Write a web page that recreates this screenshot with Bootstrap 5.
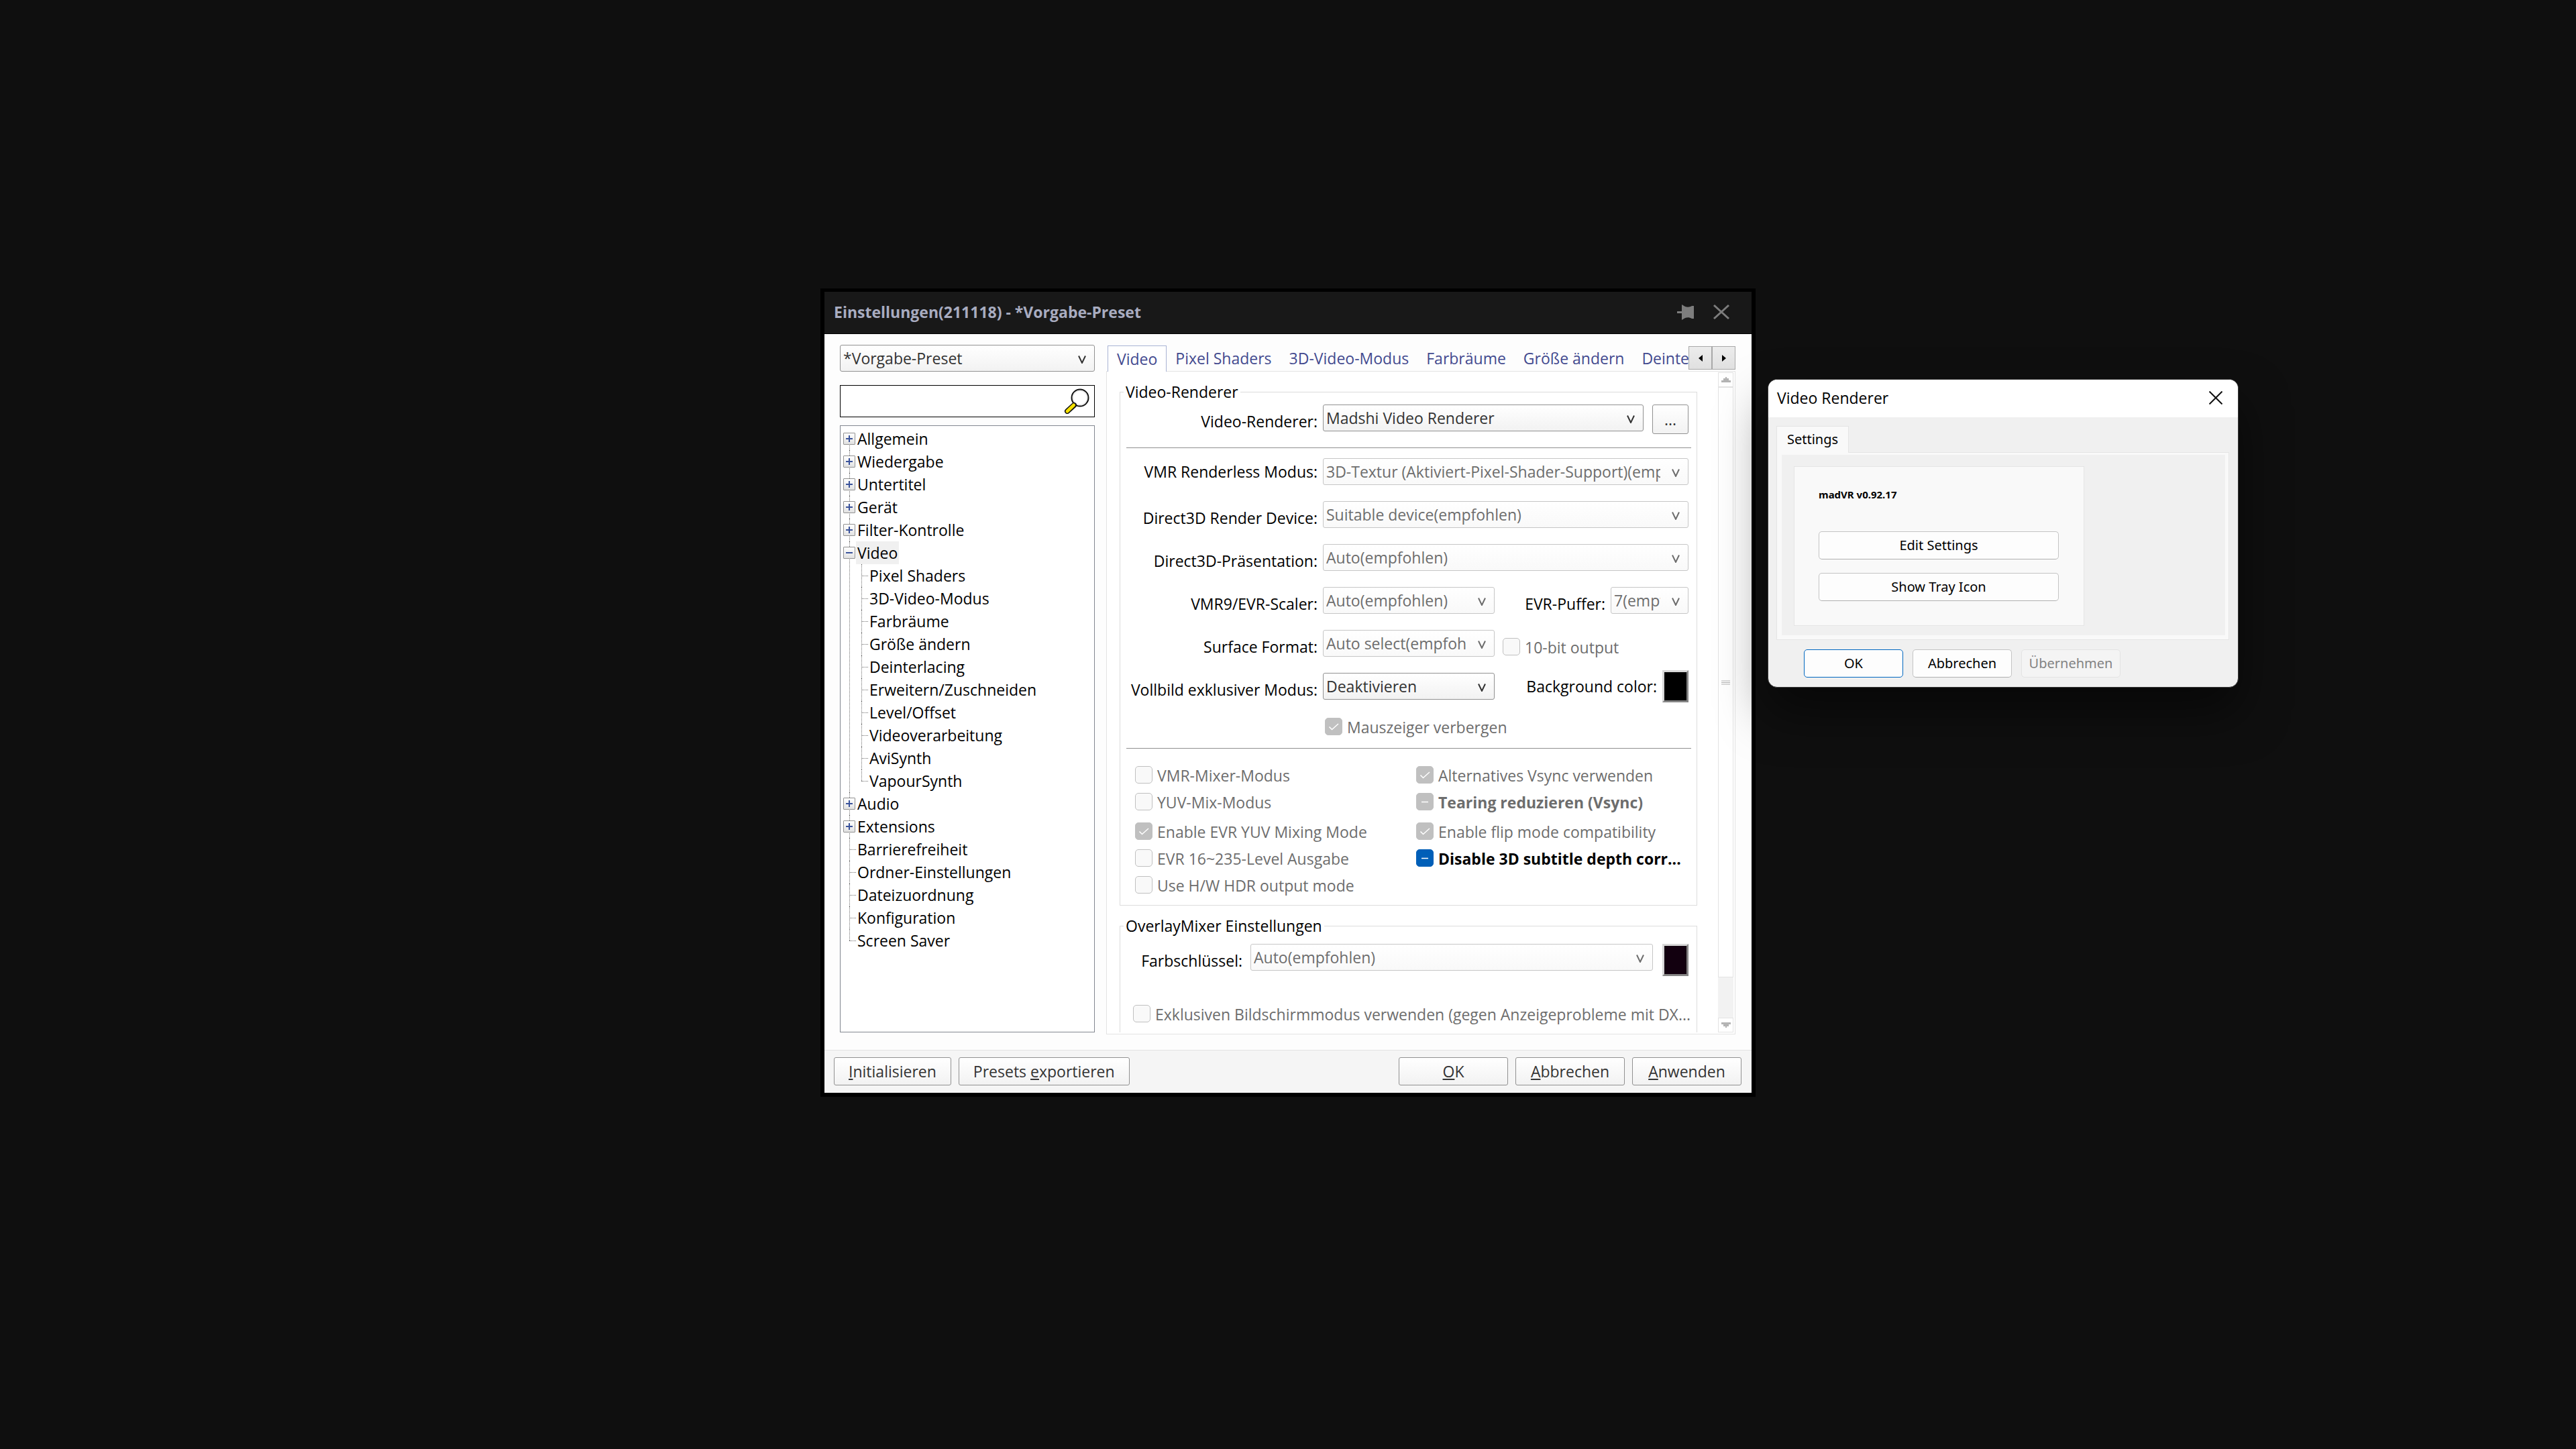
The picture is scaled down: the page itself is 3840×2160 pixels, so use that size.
<!DOCTYPE html>
<html lang="de">
<head>
<meta charset="utf-8">
<meta name="viewport" content="width=device-width, initial-scale=1">
<title>Einstellungen</title>
<link href="https://cdn.jsdelivr.net/npm/bootstrap@5.3.0/dist/css/bootstrap.min.css" rel="stylesheet">
<style>
:root { --ui: "Open Sans", "Noto Sans", sans-serif; --dlg: "Noto Sans", "Open Sans", sans-serif; }
body { background: #0f0f0f; font-family: var(--ui); font-size: 23px; line-height: 30px; color: #000; }
.desktop { min-height: 100vh; overflow: hidden; }
button, select, input { font-family: inherit; font-size: inherit; }

/* main window */
.main-window { left: 1223px; top: 430px; width: 1394px; background: #fdfdfd; border: 6px solid #000; border-top-width: 5px; }
.title-strip { background: #181818; color: #a8acc0; height: 63px; border-bottom: 1px solid #000; padding: 0 32px 2px 14px; }
.title-strip h1 { font-size: 23px; line-height: 60px; font-weight: 700; }
.plain-btn { background: none; border: 0; padding: 0; line-height: 0; }
.workspace { padding: 16px 24px 23px 23px; gap: 17px; }
.side { width: 380px; padding-bottom: 3px; }

/* drop-downs and buttons */
.combo { height: 40px; padding: 0 41px 0 4px; font-size: 23px; line-height: 38px; color: #333; border: 1px solid #919191; border-radius: 3px; box-shadow: none;
  background: url("data:image/svg+xml,%3Csvg xmlns='http://www.w3.org/2000/svg' width='12' height='12'%3E%3Cpath d='M1 0.5L6 11L11 0.5' fill='none' stroke='%23333' stroke-width='2'/%3E%3C/svg%3E") no-repeat right 12px top 15px / 12px 12px, linear-gradient(#fff, #f2f2f2); }
.combo:disabled { opacity: 1; color: #6d6d6d; border-color: #c6c6c6;
  background: url("data:image/svg+xml,%3Csvg xmlns='http://www.w3.org/2000/svg' width='12' height='12'%3E%3Cpath d='M1 0.5L6 11L11 0.5' fill='none' stroke='%236d6d6d' stroke-width='2'/%3E%3C/svg%3E") no-repeat right 12px top 15px / 12px 12px, linear-gradient(#fff, #f9f9f9); }
.combo-short { width: 256px; flex: none; }
.combo-mini { width: 116px; flex: none; }
.push { height: 42px; padding: 0 21px; line-height: 40px; color: #333; border: 1px solid #919191; border-radius: 3px; background: linear-gradient(#fff, #f2f2f2); white-space: nowrap; }
.push-wide { width: 163px; padding: 0; }
.push-more { width: 54px; height: 44px; padding: 0; margin: 0 0 -4px 5px; flex: none; }

.search-box { height: 48px; margin: 20px 0 12px; border: 1px solid #000; background: #fff; padding-right: 7px; }
.search-box input { border: 0; outline: 0; background: transparent; min-width: 0; height: 44px; padding: 0 8px; }

/* tree */
.tree-box { border: 1px solid #828790; background: #fff; padding: 2px 4px; }
.tree-box ul { list-style: none; margin: 0; padding: 0; }
.tree-box ul ul { padding-left: 18px; }
.tree-box li { position: relative; line-height: 34px; }
.tree-box li::before { content: ""; position: absolute; left: 9px; top: 0; bottom: 0; border-left: 1px dotted #6d6d6d; }
.tree-box > ul > li:first-child::before { top: 17px; }
.tree-box li:last-child::before { bottom: auto; height: 17px; }
.tree-box ul ul li:last-child::before { height: 17px; }
.node { height: 34px; }
.node a { color: #000; text-decoration: none; padding: 0 2px; }
.node a.current { background: #f0f0f0; }
.leaf-arm { width: 10px; margin-left: 9px; border-top: 1px dotted #6d6d6d; }
.toggle-box { position: relative; width: 18px; height: 18px; padding: 0; line-height: 0; margin-right: 1px; border: 1px solid #919191; border-radius: 1px; background: linear-gradient(#fff, #e2e2e2); }

/* tabs */
.tab-strip { position: relative; z-index: 1; padding-left: 2px; height: 39px; margin-top: 1px; }
.tab-strip .nav { flex-wrap: nowrap; overflow: hidden; min-width: 0; }
.tab-strip .nav-link { height: 39px; line-height: 38px; padding: 0 13px; color: #434a8f; border: 0; white-space: nowrap; }
.tab-strip .nav-link.active { background: #fff; border: 1px solid #a9b3d4; border-bottom: 0; }
.arrow-btn { width: 35px; height: 35px; margin-top: 1px; padding: 0; line-height: 0; flex: none; border: 1px solid #a8a8a8; background: linear-gradient(#ececec, #e0e0e0); }
.tab-panel { margin-top: -1px; border: 1px solid #e3e3e3; background: #fff; padding: 0 2px 2px 19px; }
.viewport { height: 985px; overflow: hidden; padding: 15px 31px 0 0; }
.bar-track { width: 23px; margin-top: 1px; background: #f2f2f2; }
.bar-btn { height: 22px; background: #fff; border: 1px solid #e3e3e3; padding: 0; line-height: 0; }
.bar-thumb { flex: 0 0 880px; background: #fff; border: 1px solid #e3e3e3; }

/* form groups */
.group { border: 1px solid #dcdcdc; padding: 4px 8px 15px 9px; }
.group legend { float: none; width: auto; font-size: 23px; line-height: 30px; padding: 0 3px; margin: 0 0 0 -4px; }
.group-next { margin-top: 15px; padding-top: 12px; height: 240px; }
.form-line { gap: 8px; height: 40px; padding-right: 4px; }
.form-line label.cap-col { width: 285px; flex: none; text-align: right; white-space: nowrap; }
.form-line label.cap-key { width: 173px; }
.rule { height: 1px; margin: 24px 0 15px; border: 0; background: #8f8f8f; opacity: 1; }
.rule-low { margin: 17px 0 26px; }
.lines { display: flex; flex-direction: column; gap: 24px; }
.swatch { width: 39px; height: 48px; margin: -4px 0; flex: none; padding: 0; border: 3px outset #d8d8d8; background: #000; }
.swatch-key { background: #12000f; margin: 0 0 -8px 6px; }

.tick { gap: 7px; height: 28px; line-height: 28px; white-space: nowrap; color: #6d6d6d; }
.tick input { appearance: none; flex: none; width: 26px; height: 26px; margin: 0; border: 1px solid #c0c0c0; border-radius: 5px; background: #f9f9f9 no-repeat center / 26px 26px; }
.tick input:checked { border-color: #c0c0c0; background-color: #c0c0c0; background-image: url("data:image/svg+xml,%3Csvg xmlns='http://www.w3.org/2000/svg' viewBox='0 0 26 26'%3E%3Cpath d='M6.500 13.500L10.500 17.500L20 9' fill='none' stroke='%23fff' stroke-width='1.500'/%3E%3C/svg%3E"); }
.tick input:indeterminate { border-color: #c0c0c0; background-color: #c0c0c0; background-image: url("data:image/svg+xml,%3Csvg xmlns='http://www.w3.org/2000/svg' viewBox='0 0 26 26'%3E%3Cpath d='M8 13.500H18' fill='none' stroke='%23fff' stroke-width='1.500'/%3E%3C/svg%3E"); }
.tick input:indeterminate:enabled { border-color: #005fb8; background-color: #005fb8; }
.tick-strong { font-weight: 700; }
.tick-live { color: #000; }
.tick-indent { margin: 27px 0 0 296px; }
.tick-last { margin: 51px 0 0 10px; }
.tick-cols { padding-left: 13px; }
.tick-cols > div { display: flex; flex-direction: column; gap: 12px; }
.tick-cols > div:first-child { width: 419px; flex: none; }

.foot { border-top: 1px solid #e3e3e3; background: #f5f5f5; padding: 10px 15px 11px 14px; gap: 11px; }

/* renderer dialog */
.dlg-window { left: 2635px; top: 565px; width: 702px; border: 1px solid #3a3a3a; border-radius: 14px; overflow: hidden; background: #f0f0f0; box-shadow: 0 36px 70px rgba(0,0,0,.5); font-family: var(--dlg); font-size: 20px; }
.dlg-title { height: 56px; background: #fff; padding: 0 23px 2px 13px; font-family: var(--ui); }
.dlg-title h2 { font-size: 23px; line-height: 54px; font-weight: 400; margin: 0; }
.dlg-body { padding: 13px 13px 0 12px; }
.dlg-body .nav-link { position: relative; z-index: 1; height: 40px; line-height: 38px; padding: 0 15px; color: #000; background: #f9f9f9; border: 1px solid #e5e5e5; border-bottom: 0; border-radius: 0; }
.dlg-pane { margin-top: -1px; border: 1px solid #e5e5e5; background: #f9f9f9; padding: 3px 5px 6px 7px; }
.dlg-inner { background: #f0f0f0; padding: 17px 18px 14px; }
.dlg-card { width: 433px; gap: 20px; background: #f9f9f9; border: 1px solid #e5e5e5; padding: 29px 37px 36px 36px; }
.dlg-card strong { font-size: 15px; line-height: 24px; margin-bottom: 23px; }
.dlg-btn { height: 42px; line-height: 40px; padding: 0; background: #fdfdfd; color: #000; border: 1px solid #c4c4c4; border-bottom-color: #b0b0b0; border-radius: 5px; }
.dlg-foot { padding: 14px 53px 14px; gap: 14px; }
.dlg-foot .dlg-btn { width: 148px; }
.dlg-foot .dlg-btn:disabled { color: #838383; background: #f4f4f4; border-color: #e3e3e3; }
.dlg-foot .dlg-default { border-color: #0067c0; }
</style>
<script src="https://cdn.jsdelivr.net/npm/bootstrap@5.3.0/dist/js/bootstrap.bundle.min.js"></script>
</head>
<body>
<main class="desktop position-relative">

<section class="main-window position-absolute" aria-labelledby="mainTitle">
  <header class="title-strip d-flex align-items-center">
    <h1 id="mainTitle" class="m-0 me-auto">Einstellungen(211118) - *Vorgabe-Preset</h1>
    <button class="plain-btn me-4" type="button" aria-label="Anheften"><svg width="32" height="26" viewBox="0 0 32 26"><path d="M3 12h7V2l5 3c3 1 7 1 10-1h3v19h-3c-3-2-7-2-10-1l-5 3V15H3z" fill="#7d7d7d"/></svg></button>
    <button class="plain-btn" type="button" aria-label="Schließen"><svg width="26" height="24" viewBox="0 0 26 24"><path d="M2 2L24 22M24 2L2 22" stroke="#7d7d7d" stroke-width="3"/></svg></button>
  </header>

  <div class="workspace d-flex">
    <aside class="side d-flex flex-column flex-shrink-0">
      <select class="form-select combo" aria-label="Preset"><option>*Vorgabe-Preset</option></select>
      <div class="search-box d-flex align-items-center">
        <input class="flex-grow-1" type="text" aria-label="Suche">
        <svg width="38" height="38" viewBox="0 0 38 38"><circle cx="24" cy="14" r="12.500" fill="#fff" stroke="#111" stroke-width="2"/><circle cx="24" cy="14" r="10.500" fill="none" stroke="#ddd"/><path d="M15 25L5 34" stroke="#111" stroke-width="8" stroke-linecap="round"/><path d="M14.500 25L5 34" stroke="#f5e100" stroke-width="5" stroke-linecap="round"/></svg>
      </div>
      <nav class="tree-box flex-grow-1" aria-label="Kategorien"><ul id="tree"></ul></nav>
    </aside>

    <div class="flex-grow-1" style="min-width:0">
      <div class="tab-strip d-flex">
        <nav class="nav flex-grow-1">
          <a class="nav-link active" href="#">Video</a>
          <a class="nav-link" href="#">Pixel Shaders</a>
          <a class="nav-link" href="#">3D-Video-Modus</a>
          <a class="nav-link" href="#">Farbräume</a>
          <a class="nav-link" href="#">Größe ändern</a>
          <a class="nav-link" href="#">Deinterlacing</a>
        </nav>
        <button class="arrow-btn" type="button" aria-label="Zurück"><svg width="12" height="12"><path d="M9 1v10L3 6z"/></svg></button>
        <button class="arrow-btn" type="button" aria-label="Weiter"><svg width="12" height="12"><path d="M3 1v10l6-5z"/></svg></button>
      </div>

      <div class="tab-panel d-flex">
        <div class="viewport flex-grow-1">
          <fieldset class="group">
            <legend>Video-Renderer</legend>
            <div class="form-line d-flex">
              <label class="cap-col align-self-end" for="renderer">Video-Renderer:</label>
              <select id="renderer" class="form-select combo"><option>Madshi Video Renderer</option></select>
              <button class="push push-more" type="button">...</button>
            </div>
            <hr class="rule">
            <div class="lines">
              <div class="form-line d-flex">
                <label class="cap-col align-self-center" for="vmr">VMR Renderless Modus:</label>
                <select id="vmr" class="form-select combo" disabled><option>3D-Textur (Aktiviert-Pixel-Shader-Support)(empfohlen)</option></select>
              </div>
              <div class="form-line d-flex">
                <label class="cap-col align-self-end" for="d3ddev">Direct3D Render Device:</label>
                <select id="d3ddev" class="form-select combo" disabled><option>Suitable device(empfohlen)</option></select>
              </div>
              <div class="form-line d-flex">
                <label class="cap-col align-self-end" for="d3dpres">Direct3D-Präsentation:</label>
                <select id="d3dpres" class="form-select combo" disabled><option>Auto(empfohlen)</option></select>
              </div>
              <div class="form-line d-flex">
                <label class="cap-col align-self-end" for="scaler">VMR9/EVR-Scaler:</label>
                <select id="scaler" class="form-select combo combo-short" disabled><option>Auto(empfohlen)</option></select>
                <label class="flex-grow-1 text-end align-self-end" for="buffer">EVR-Puffer:</label>
                <select id="buffer" class="form-select combo combo-mini" disabled><option>7(empfohlen)</option></select>
              </div>
              <div class="form-line d-flex">
                <label class="cap-col align-self-end" for="surface">Surface Format:</label>
                <select id="surface" class="form-select combo combo-short" disabled><option>Auto select(empfohlen)</option></select>
                <label class="tick d-flex align-self-end ms-1"><input type="checkbox" disabled>10-bit output</label>
              </div>
              <div class="form-line d-flex">
                <label class="cap-col align-self-end" for="fullscreen">Vollbild exklusiver Modus:</label>
                <select id="fullscreen" class="form-select combo combo-short"><option>Deaktivieren</option></select>
                <label class="flex-grow-1 text-end align-self-center" for="bgcolor">Background color:</label>
                <button id="bgcolor" class="swatch" type="button"></button>
              </div>
            </div>
            <label class="tick tick-indent d-flex"><input type="checkbox" checked disabled>Mauszeiger verbergen</label>
            <hr class="rule rule-low">
            <div class="tick-cols d-flex">
              <div>
                <label class="tick d-flex"><input type="checkbox" disabled>VMR-Mixer-Modus</label>
                <label class="tick d-flex"><input type="checkbox" disabled>YUV-Mix-Modus</label>
                <label class="tick d-flex mt-1"><input type="checkbox" checked disabled>Enable EVR YUV Mixing Mode</label>
                <label class="tick d-flex"><input type="checkbox" disabled>EVR 16~235-Level Ausgabe</label>
                <label class="tick d-flex"><input type="checkbox" disabled>Use H/W HDR output mode</label>
              </div>
              <div>
                <label class="tick d-flex"><input type="checkbox" checked disabled>Alternatives Vsync verwenden</label>
                <label class="tick tick-strong d-flex"><input type="checkbox" class="mixed" disabled>Tearing reduzieren (Vsync)</label>
                <label class="tick d-flex mt-1"><input type="checkbox" checked disabled>Enable flip mode compatibility</label>
                <label class="tick tick-strong tick-live d-flex"><input type="checkbox" class="mixed">Disable 3D subtitle depth corr...</label>
              </div>
            </div>
          </fieldset>

          <fieldset class="group group-next">
            <legend>OverlayMixer Einstellungen</legend>
            <div class="form-line d-flex">
              <label class="cap-col cap-key align-self-end me-1" for="key">Farbschlüssel:</label>
              <select id="key" class="form-select combo" disabled><option>Auto(empfohlen)</option></select>
              <button class="swatch swatch-key" type="button" aria-label="Farbe"></button>
            </div>
            <label class="tick tick-last d-flex"><input type="checkbox" disabled>Exklusiven Bildschirmmodus verwenden (gegen Anzeigeprobleme mit DX...</label>
          </fieldset>
        </div>
        <div class="bar-track d-flex flex-column flex-shrink-0">
          <button class="bar-btn" type="button" aria-label="Nach oben"><svg width="14" height="10"><path d="M0 9V6h3V3h3V1h2v2h3v3h3v3z" fill="#b4b4b4"/></svg></button>
          <div class="bar-thumb d-flex align-items-center justify-content-center"><svg width="13" height="7"><path d="M0 1h13M0 3.500h13M0 6h13" stroke="#b4b4b4"/></svg></div>
          <button class="bar-btn mt-auto" type="button" aria-label="Nach unten"><svg width="14" height="10"><path d="M0 1v3h3v3h3v2h2V7h3V4h3V1z" fill="#b4b4b4"/></svg></button>
        </div>
      </div>
    </div>
  </div>

  <footer class="foot d-flex">
    <button class="push" type="button"><u>I</u>nitialisieren</button>
    <button class="push me-auto" type="button">Presets <u>e</u>xportieren</button>
    <button class="push push-wide" type="button"><u>O</u>K</button>
    <button class="push push-wide" type="button"><u>A</u>bbrechen</button>
    <button class="push push-wide" type="button"><u>A</u>nwenden</button>
  </footer>
</section>

<section class="dlg-window position-absolute" role="dialog" aria-labelledby="dlgTitle">
  <header class="dlg-title d-flex align-items-center justify-content-between">
    <h2 id="dlgTitle">Video Renderer</h2>
    <button class="plain-btn" type="button" aria-label="Schließen"><svg width="20" height="20"><path d="M0.500 0.500L19.500 19.500M19.500 0.500L0.500 19.500" stroke="#111" stroke-width="2"/></svg></button>
  </header>
  <div class="dlg-body">
    <nav class="nav"><a class="nav-link" href="#">Settings</a></nav>
    <div class="dlg-pane"><div class="dlg-inner">
      <div class="dlg-card d-flex flex-column">
        <strong>madVR v0.92.17</strong>
        <button class="dlg-btn" type="button">Edit Settings</button>
        <button class="dlg-btn" type="button">Show Tray Icon</button>
      </div>
    </div></div>
  </div>
  <footer class="dlg-foot d-flex">
    <button class="dlg-btn dlg-default" type="button">OK</button>
    <button class="dlg-btn" type="button">Abbrechen</button>
    <button class="dlg-btn" type="button" disabled>Übernehmen</button>
  </footer>
</section>
</main>

<script>
const nodes = [
  ['Allgemein', []], ['Wiedergabe', []], ['Untertitel', []], ['Gerät', []], ['Filter-Kontrolle', []],
  ['Video', ['Pixel Shaders', '3D-Video-Modus', 'Farbräume', 'Größe ändern', 'Deinterlacing', 'Erweitern/Zuschneiden', 'Level/Offset', 'Videoverarbeitung', 'AviSynth', 'VapourSynth']],
  ['Audio', []], ['Extensions', []],
  ['Barrierefreiheit'], ['Ordner-Einstellungen'], ['Dateizuordnung'], ['Konfiguration'], ['Screen Saver']
];
const leaf = t => `<div class="node d-flex align-items-center"><span class="leaf-arm"></span><a href="#">${t}</a></div>`;
const toggle = open => `<button class="toggle-box" type="button" aria-label="Umschalten"><svg width="16" height="16"><path d="M3 8h10${open ? '' : 'M8 3v10'}" stroke="#3a539b" stroke-width="2"/></svg></button>`;
document.getElementById('tree').innerHTML = nodes.map(([t, kids]) => {
  if (!kids) return `<li>${leaf(t)}</li>`;
  const open = kids.length > 0;
  return `<li><div class="node d-flex align-items-center">${toggle(open)}<a href="#"${open ? ' class="current"' : ''}>${t}</a></div>` +
    (open ? `<ul>${kids.map(k => `<li>${leaf(k)}</li>`).join('')}</ul>` : '') + '</li>';
}).join('');
document.querySelectorAll('.mixed').forEach(c => { c.indeterminate = true; });
</script>
</body>
</html>
